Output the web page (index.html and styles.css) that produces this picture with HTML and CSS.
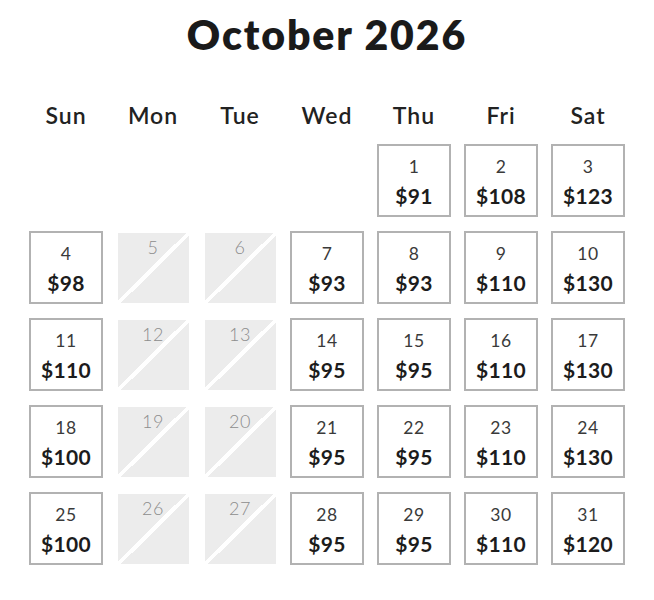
FILE: index.html
```html
<!DOCTYPE html>
<html>
<head>
<meta charset="utf-8">
<link rel="stylesheet" href="styles.css">
</head>
<body>
<div class="calendar">
  <h1 class="title">October 2026</h1>
  <div class="grid">
    <div class="dow">Sun</div><div class="dow">Mon</div><div class="dow">Tue</div><div class="dow">Wed</div><div class="dow">Thu</div><div class="dow">Fri</div><div class="dow">Sat</div>

    <div class="slot"></div><div class="slot"></div><div class="slot"></div><div class="slot"></div>
    <div class="slot"><div class="day"><span class="num">1</span><span class="price">$91</span></div></div>
    <div class="slot"><div class="day"><span class="num">2</span><span class="price">$108</span></div></div>
    <div class="slot"><div class="day"><span class="num">3</span><span class="price">$123</span></div></div>

    <div class="slot"><div class="day"><span class="num">4</span><span class="price">$98</span></div></div>
    <div class="slot"><div class="off"><span class="num">5</span></div></div>
    <div class="slot"><div class="off"><span class="num">6</span></div></div>
    <div class="slot"><div class="day"><span class="num">7</span><span class="price">$93</span></div></div>
    <div class="slot"><div class="day"><span class="num">8</span><span class="price">$93</span></div></div>
    <div class="slot"><div class="day"><span class="num">9</span><span class="price">$110</span></div></div>
    <div class="slot"><div class="day"><span class="num">10</span><span class="price">$130</span></div></div>

    <div class="slot"><div class="day"><span class="num">11</span><span class="price">$110</span></div></div>
    <div class="slot"><div class="off"><span class="num">12</span></div></div>
    <div class="slot"><div class="off"><span class="num">13</span></div></div>
    <div class="slot"><div class="day"><span class="num">14</span><span class="price">$95</span></div></div>
    <div class="slot"><div class="day"><span class="num">15</span><span class="price">$95</span></div></div>
    <div class="slot"><div class="day"><span class="num">16</span><span class="price">$110</span></div></div>
    <div class="slot"><div class="day"><span class="num">17</span><span class="price">$130</span></div></div>

    <div class="slot"><div class="day"><span class="num">18</span><span class="price">$100</span></div></div>
    <div class="slot"><div class="off"><span class="num">19</span></div></div>
    <div class="slot"><div class="off"><span class="num">20</span></div></div>
    <div class="slot"><div class="day"><span class="num">21</span><span class="price">$95</span></div></div>
    <div class="slot"><div class="day"><span class="num">22</span><span class="price">$95</span></div></div>
    <div class="slot"><div class="day"><span class="num">23</span><span class="price">$110</span></div></div>
    <div class="slot"><div class="day"><span class="num">24</span><span class="price">$130</span></div></div>

    <div class="slot"><div class="day"><span class="num">25</span><span class="price">$100</span></div></div>
    <div class="slot"><div class="off"><span class="num">26</span></div></div>
    <div class="slot"><div class="off"><span class="num">27</span></div></div>
    <div class="slot"><div class="day"><span class="num">28</span><span class="price">$95</span></div></div>
    <div class="slot"><div class="day"><span class="num">29</span><span class="price">$95</span></div></div>
    <div class="slot"><div class="day"><span class="num">30</span><span class="price">$110</span></div></div>
    <div class="slot"><div class="day"><span class="num">31</span><span class="price">$120</span></div></div>
  </div>
</div>
</body>
</html>
```
FILE: styles.css
```css
html, body {
  margin: 0;
  padding: 0;
  background: #fff;
}
body {
  font-family: "Lato", "Noto Sans", sans-serif;
  color: #1c1c1c;
  width: 654px;
  height: 600px;
  overflow: hidden;
}
.calendar {
  display: flex;
  flex-direction: column;
  align-items: center;
  padding-top: 13px;
}
.title {
  margin: 0;
  font-size: 41px;
  font-weight: 800;
  line-height: 44px;
  letter-spacing: 1.9px;
  color: #1a1a1a;
}
.grid {
  margin-top: 43px;
  display: grid;
  grid-template-columns: repeat(7, 87px);
  grid-template-rows: 30px repeat(5, 73px);
  row-gap: 14px;
}
.dow {
  text-align: center;
  font-size: 23px;
  font-weight: 600;
  line-height: 30px;
  letter-spacing: 1px;
  color: #222;
}
.slot {
  display: flex;
  align-items: center;
  justify-content: center;
}
.day {
  box-sizing: border-box;
  width: 74px;
  height: 73px;
  border: 2px solid #b2b2b2;
  display: flex;
  flex-direction: column;
  align-items: center;
  padding-top: 10px;
}
.day .num {
  font-size: 17.5px;
  font-weight: 400;
  line-height: 22px;
  color: #3a3a3a;
  letter-spacing: 0.5px;
}
.day .price {
  margin-top: 6px;
  font-size: 21px;
  font-weight: 700;
  line-height: 24px;
  color: #1c1c1c;
  letter-spacing: 0.3px;
}
.off {
  box-sizing: border-box;
  width: 71px;
  height: 70px;
  background:
    linear-gradient(to bottom right, transparent calc(50% - 2px), #fff calc(50% - 2px), #fff calc(50% + 2px), transparent calc(50% + 2px)),
    #ececec;
  display: flex;
  justify-content: center;
  padding-top: 3px;
}
.off .num {
  font-size: 18px;
  font-weight: 300;
  line-height: 22px;
  color: #8c8c8c;
  letter-spacing: 0.5px;
}
```
